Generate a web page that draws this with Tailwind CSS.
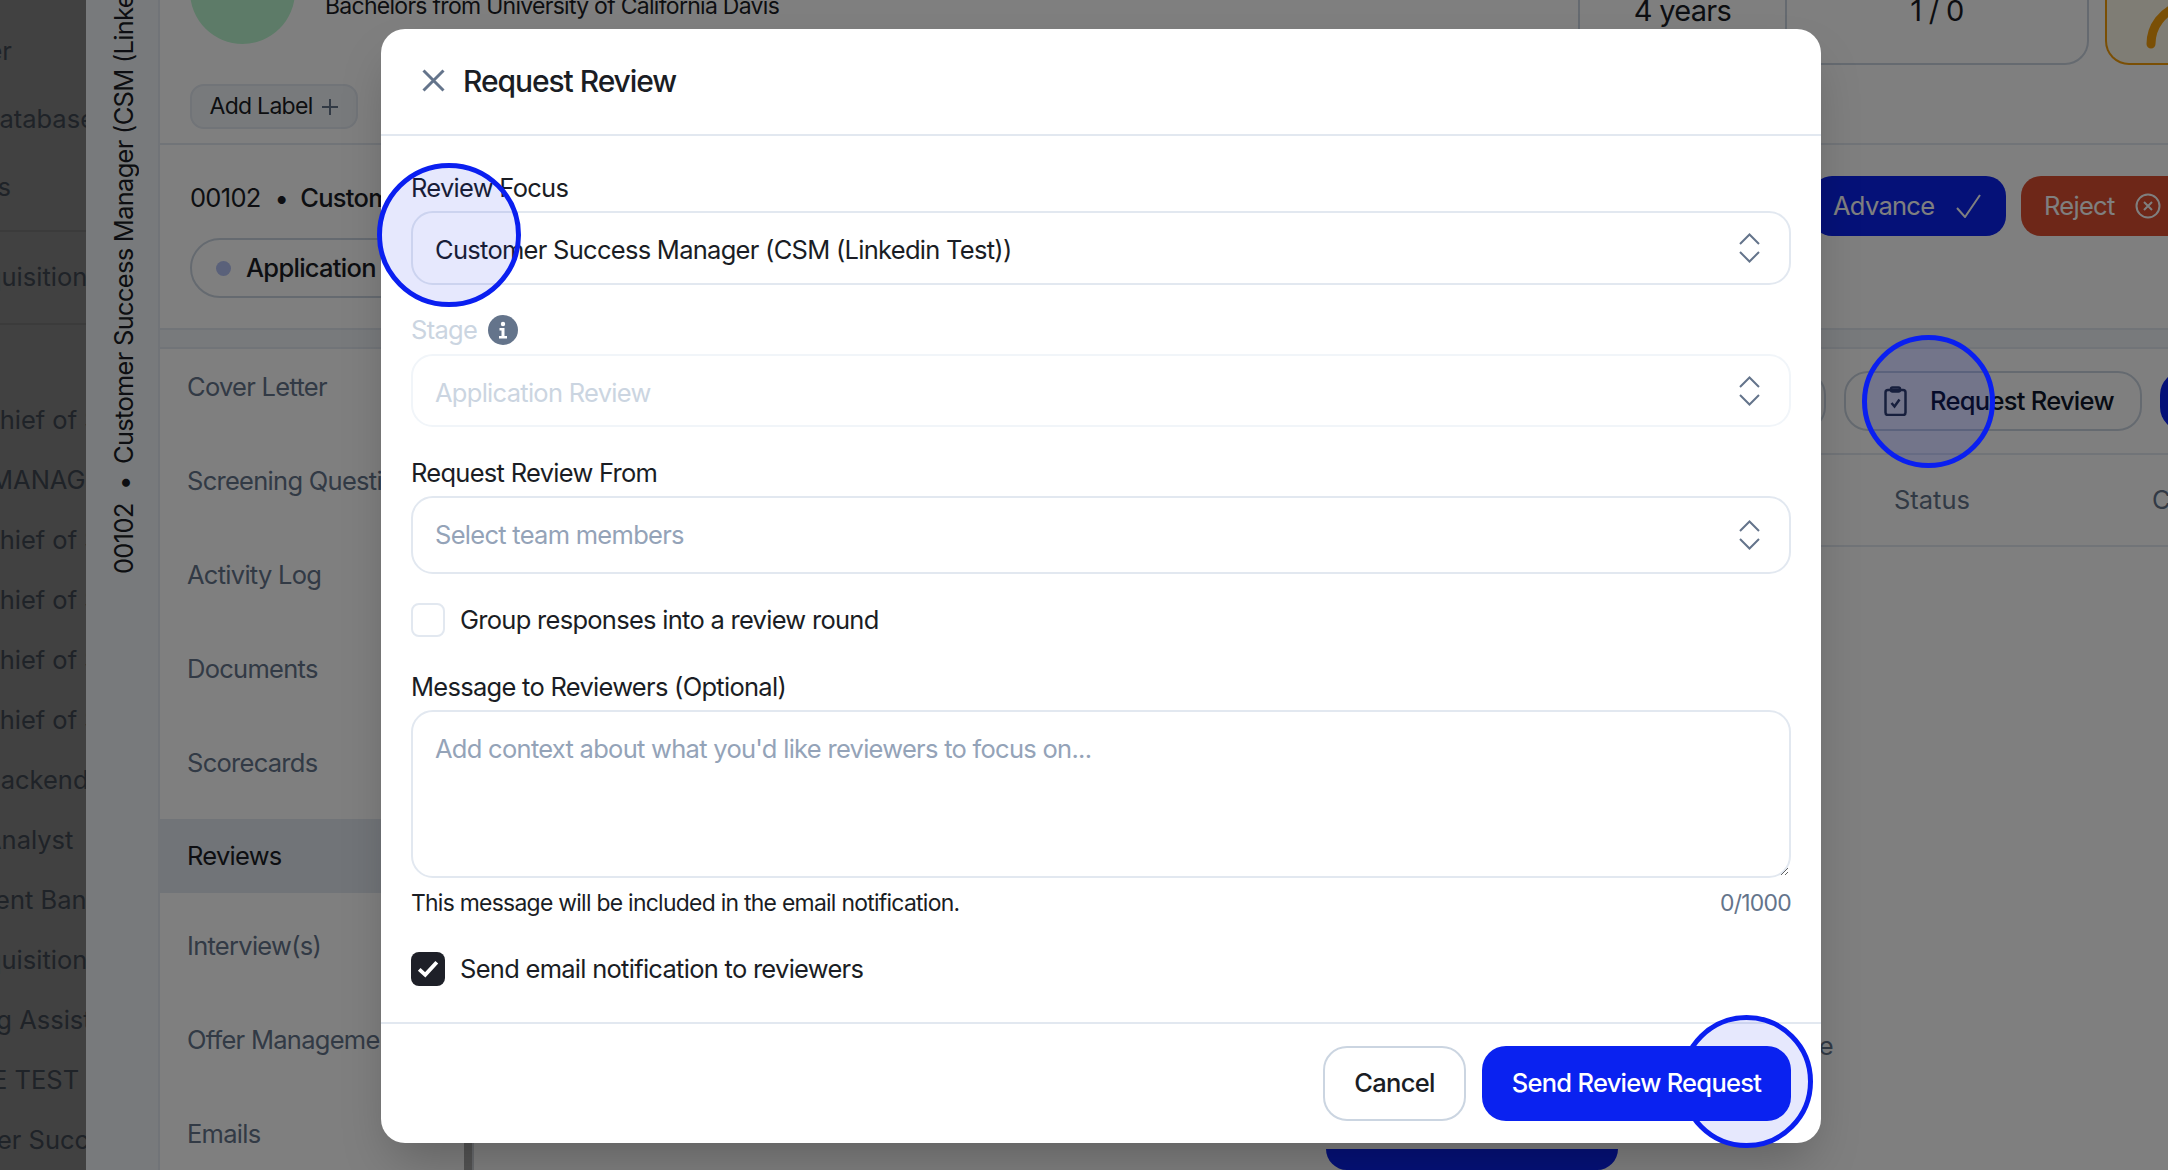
<!DOCTYPE html>
<html lang="en">
<head>
    <meta charset="UTF-8">
    <title>Request Review</title>
    <script src="https://cdn.jsdelivr.net/npm/@tailwindcss/browser@4"></script>
</head>
<body class="relative h-[1170px] w-[2168px] overflow-hidden bg-white font-[family-name:Inter,sans-serif] text-[25.5px] tracking-[-0.72px] text-[#1a1d24]">
    <!-- page behind the dialog -->
    <div class="flex h-full">
        <!-- app sidebar -->
        <aside class="h-full w-[86px] shrink-0 overflow-hidden whitespace-nowrap bg-[#828282] tracking-normal text-[#3f4650]">
            <div class="h-[232px] border-b-2 border-[#777777] pt-[17px]">
                <div class="flex h-[68px] items-center -ml-[45px]">User</div>
                <div class="flex h-[68px] items-center -ml-[19px]">Database</div>
                <div class="flex h-[68px] items-center -ml-[48px]">Jobs</div>
            </div>
            <div class="flex h-[93px] items-center border-b-2 border-[#777777] -ml-[45px]">Requisitions</div>
            <div class="pt-[65px]">
                <div class="flex h-[60px] items-center -ml-[19px]">Chief of Staff</div>
                <div class="flex h-[60px] items-center -ml-[10px]">MANAGER</div>
                <div class="flex h-[60px] items-center -ml-[19px]">Chief of Staff</div>
                <div class="flex h-[60px] items-center -ml-[19px]">Chief of Staff</div>
                <div class="flex h-[60px] items-center -ml-[19px]">Chief of Staff</div>
                <div class="flex h-[60px] items-center -ml-[19px]">Chief of Staff</div>
                <div class="flex h-[60px] items-center -ml-[16px]">Backend</div>
                <div class="flex h-[60px] items-center -ml-[16px]">Analyst</div>
                <div class="flex h-[60px] items-center -ml-[40px]">Talent Bank</div>
                <div class="flex h-[60px] items-center -ml-[45px]">Requisitions</div>
                <div class="flex h-[60px] items-center -ml-[60px]">Hiring Assistant</div>
                <div class="flex h-[60px] items-center -ml-[8px]">E TEST</div>
                <div class="flex h-[60px] items-center -ml-[96px]">Customer Success</div>
            </div>
        </aside>

        <!-- vertical job strip -->
        <div class="flex h-full w-[74px] shrink-0 justify-center overflow-hidden border-r-2 border-[#e2e8f0] bg-[#f1f5f9]">
            <div class="ml-[3px] mt-[-600px] h-[1174px] rotate-180 whitespace-nowrap leading-[74px] [writing-mode:vertical-rl]">00102&nbsp; <span class="my-[2px]">•</span>&nbsp; Customer Success Manager (CSM (Linkedin Test))</div>
        </div>

        <main class="flex h-full min-w-0 flex-1 flex-col">
            <!-- candidate header -->
            <section class="flex h-[145px] shrink-0 justify-between border-b-2 border-[#e2e8f0]">
                <div class="pl-[30px]">
                    <div class="flex items-start">
                        <div class="-mt-[61px] size-[105px] rounded-full bg-[#bbf7d0]"></div>
                        <div class="-mt-[10px] ml-[30px] text-[23px] leading-[32px]">Bachelors from University of California Davis</div>
                    </div>
                    <div class="mt-[40px] flex h-[45px] w-[168px] items-center justify-center gap-[8px] rounded-[14px] border-2 border-[#e2e8f0] bg-[#f1f5f9] text-[23px]">
                        Add Label
                        <svg class="size-[18px]" viewBox="0 0 18 18" fill="none" stroke="#64748b" stroke-width="2"><path d="M9 1v16M1 9h16"/></svg>
                    </div>
                </div>
                <div class="flex items-start gap-[16px] -mr-[64px]">
                    <div class="-mt-[3px] flex h-[68px] w-[800px] rounded-br-[24px] border-r-2 border-b-2 border-[#cbd5e1] text-[29px] leading-[28px]">
                        <div class="h-[46px] w-[291px] border-r-2 border-[#cbd5e1]"></div>
                        <div class="h-[46px] w-[207px] border-r-2 border-[#cbd5e1] text-center">4 years</div>
                        <div class="w-[300px] text-center">1 / 0</div>
                    </div>
                    <div class="h-[65px] w-[127px] overflow-hidden rounded-bl-[24px] border-2 border-t-0 border-[#f59e0b] bg-[#fffbeb]">
                        <svg class="ml-[38px]" width="40" height="50" viewBox="0 0 40 50" fill="none" stroke="#f59e0b" stroke-width="9" stroke-linecap="round"><path d="M6 44C6 28 16 10 40 4"/></svg>
                    </div>
                </div>
            </section>

            <!-- job row with actions -->
            <section class="flex h-[185px] shrink-0 justify-between border-b-2 border-[#e2e8f0]">
                <div class="pl-[30px] pt-[37px]">
                    <div class="flex h-[32px] items-center whitespace-nowrap">00102<span class="ml-[14px] mr-[12px]">•</span><span class="font-medium">Customer Success</span></div>
                    <div class="mt-[24px] flex h-[60px] w-[420px] items-center gap-[15px] rounded-full border-2 border-[#cbd5e1] pl-[24px] font-medium">
                        <span class="size-[15px] rounded-full bg-[#b4c2f4]"></span>Application Review
                    </div>
                </div>
                <div class="flex items-start gap-[15px] pt-[31px] -mr-[22px]">
                    <div class="flex h-[60px] w-[194px] items-center gap-[22px] rounded-[20px] bg-[#0a22f0] pl-[21px] text-white">
                        Advance
                        <svg class="w-[26px]" viewBox="0 0 26 24" fill="none" stroke="white" stroke-width="2"><path d="M1 14l8 9L24 1"/></svg>
                    </div>
                    <div class="flex h-[60px] w-[169px] items-center gap-[20px] rounded-[20px] bg-[#dc4e30] pl-[23px] text-white">
                        Reject
                        <svg class="size-[26px]" viewBox="0 0 26 26" fill="none" stroke="white" stroke-width="2"><circle cx="13" cy="13" r="11.5"/><path d="M9 9l8 8M17 9l-8 8"/></svg>
                    </div>
                </div>
            </section>
            <div class="h-[17px] shrink-0 bg-[#f1f5f9]"></div>

            <div class="flex min-h-0 flex-1 border-t-2 border-[#e2e8f0]">
                <!-- candidate tabs -->
                <nav class="w-[304px] shrink-0 overflow-hidden pt-[2px] whitespace-nowrap text-[#64748b]">
                    <div class="flex flex-col gap-[21px]">
                        <div class="flex h-[73px] items-center pl-[27px]">Cover Letter</div>
                        <div class="flex h-[73px] items-center pl-[27px]">Screening Questions</div>
                        <div class="flex h-[73px] items-center pl-[27px]">Activity Log</div>
                        <div class="flex h-[73px] items-center pl-[27px]">Documents</div>
                        <div class="flex h-[73px] items-center pl-[27px]">Scorecards</div>
                        <div class="-mt-[2px] -mb-[4px] flex h-[74px] items-center bg-[#e2e8f0] pl-[27px] text-[#1a1d24]">Reviews</div>
                        <div class="flex h-[73px] items-center pl-[27px]">Interview(s)</div>
                        <div class="flex h-[73px] items-center pl-[27px]">Offer Management</div>
                        <div class="flex h-[73px] items-center pl-[27px]">Emails</div>
                    </div>
                </nav>

                <!-- reviews pane -->
                <div class="flex min-w-0 flex-1 flex-col border-l-[8px] border-[#a9a9a9] shadow-[inset_2px_0_0_#d0d4da]">
                    <div class="flex h-[106px] shrink-0 items-center justify-end gap-[18px] border-b-2 border-[#e2e8f0] -mr-[60px]">
                        <div class="h-[60px] w-[120px] rounded-r-[24px] border-2 border-[#cbd5e1]"></div>
                        <div class="flex h-[60px] w-[298px] items-center gap-[23px] rounded-[24px] border-2 border-[#cbd5e1] pl-[38px] font-medium text-[#0f172a]">
                            <svg width="23" height="30" viewBox="0 0 23 30" fill="none" stroke="#334155" stroke-width="2.500"><rect x="1.500" y="4" width="20" height="25" rx="2.500"/><rect x="7" y="1.500" width="9" height="4" rx="1.500"/><path d="M7.500 17l3 3.500 5-7"/></svg>
                            Request Review
                        </div>
                        <div class="h-[60px] w-[68px] rounded-l-[24px] bg-[#0a22f0]"></div>
                    </div>
                    <div class="flex h-[92px] shrink-0 items-center justify-end gap-[182px] whitespace-nowrap border-b-2 border-[#e2e8f0] -mr-[60px] tracking-normal text-[#64748b]">
                        <span>Status</span>
                        <span class="w-[76px]">Created</span>
                    </div>
                    <div class="mt-[480px] flex justify-end pr-[335px] text-[#64748b]">Reviewer role</div>
                    <div class="mt-[84px] ml-[854px] h-[60px] w-[292px] rounded-b-[24px] bg-[#0a22f0]"></div>
                </div>
            </div>
        </main>
    </div>

    <!-- backdrop -->
    <div class="absolute inset-0 bg-black/50"></div>

    <!-- dialog -->
    <div class="absolute left-[381px] top-[29px] flex h-[1114px] w-[1440px] flex-col rounded-[24px] bg-white shadow-2xl">
        <header class="flex h-[107px] shrink-0 items-center border-b-2 border-[#e2e8f0] pb-[2px] pl-[41px]">
            <svg class="size-[23px]" viewBox="0 0 23 23" fill="none" stroke="#64748b" stroke-width="3"><path d="M1.500 1.500l20 20M21.500 1.500l-20 20"/></svg>
            <h2 class="ml-[18px] text-[30px] font-medium leading-[40px] tracking-[-1.07px]">Request Review</h2>
        </header>

        <div class="flex flex-1 flex-col px-[30px] pt-[36px]">
            <label class="h-[32px] leading-[32px]">Review Focus</label>
            <div class="mt-[7px] flex h-[74px] items-center justify-between rounded-[22px] border-2 border-[#e2e8f0] pl-[22px] pr-[29px]">
                <span class="pt-[5px]">Customer Success Manager (CSM (Linkedin Test))</span>
                <svg width="21" height="30" viewBox="0 0 21 30" fill="none" stroke="#64748b" stroke-width="2"><path d="M1 11L10.500 1.500 20 11M1 19l9.500 9.500L20 19"/></svg>
            </div>

            <div class="mt-[29px] flex h-[32px] items-center gap-[11px]">
                <label class="text-[#cbd5e1]">Stage</label>
                <svg class="size-[30px]" viewBox="0 0 30 30"><circle cx="15" cy="15" r="15" fill="#64748b"/><circle cx="15" cy="9" r="2.200" fill="white"/><path d="M11.500 13h5v8h2.500v2.500h-8V21h2.500v-5.500h-2z" fill="white"/></svg>
            </div>
            <div class="mt-[8px] flex h-[73px] items-center justify-between rounded-[22px] border-2 border-[#f1f5f9] pl-[22px] pr-[29px]">
                <span class="pt-[5px] text-[#cbd5e1]">Application Review</span>
                <svg width="21" height="30" viewBox="0 0 21 30" fill="none" stroke="#64748b" stroke-width="2"><path d="M1 11L10.500 1.500 20 11M1 19l9.500 9.500L20 19"/></svg>
            </div>

            <label class="mt-[30px] h-[32px] leading-[32px]">Request Review From</label>
            <div class="mt-[7px] flex h-[78px] items-center justify-between rounded-[22px] border-2 border-[#e2e8f0] pl-[22px] pr-[29px]">
                <span class="pt-[1px] text-[#94a3b8]">Select team members</span>
                <svg width="21" height="30" viewBox="0 0 21 30" fill="none" stroke="#64748b" stroke-width="2"><path d="M1 11L10.500 1.500 20 11M1 19l9.500 9.500L20 19"/></svg>
            </div>

            <div class="mt-[29px] flex h-[34px] items-center gap-[15px]">
                <span class="size-[34px] rounded-[8px] border-2 border-[#e2e8f0]"></span>
                <span>Group responses into a review round</span>
            </div>

            <label class="mt-[34px] h-[32px] leading-[32px]">Message to Reviewers (Optional)</label>
            <textarea class="mt-[7px] h-[168px] w-full rounded-[22px] border-2 border-[#e2e8f0] px-[22px] pt-[21px] leading-[32px] outline-none placeholder:text-[#94a3b8]" placeholder="Add context about what you'd like reviewers to focus on..."></textarea>
            <div class="mt-[9px] flex h-[32px] items-center justify-between text-[22.9px]">
                <span>This message will be included in the email notification.</span>
                <span class="text-[#64748b]">0/1000</span>
            </div>

            <div class="mt-[33px] flex h-[34px] items-center gap-[15px]">
                <span class="flex size-[34px] items-center justify-center rounded-[8px] bg-[#1e2028]">
                    <svg class="w-[22px]" viewBox="0 0 20 16" fill="none" stroke="white" stroke-width="3.500"><path d="M2 8.500l5.500 5L18 2"/></svg>
                </span>
                <span>Send email notification to reviewers</span>
            </div>
        </div>

        <footer class="flex h-[121px] shrink-0 justify-end gap-[16px] border-t-2 border-[#e2e8f0] pr-[30px] pt-[22px]">
            <button class="h-[75px] w-[143px] rounded-[24px] border-2 border-[#cbd5e1] bg-white font-medium">Cancel</button>
            <button class="relative z-20 h-[75px] w-[309px] rounded-[24px] bg-[#0a22f0] font-medium text-white">Send Review Request</button>
        </footer>
    </div>

    <!-- tutorial highlights -->
    <div class="absolute left-[377px] top-[163px] z-10 size-[144px] rounded-full border-[5px] border-[#0a1ff0] bg-[#0a1ff0]/10"></div>
    <div class="absolute left-[1862px] top-[335px] z-10 size-[133px] rounded-full border-[5px] border-[#0a1ff0] bg-[#0a1ff0]/10"></div>
    <div class="absolute left-[1680px] top-[1015px] z-10 size-[133px] rounded-full border-[5px] border-[#0a1ff0] bg-[#0a1ff0]/10"></div>
</body>
</html>
